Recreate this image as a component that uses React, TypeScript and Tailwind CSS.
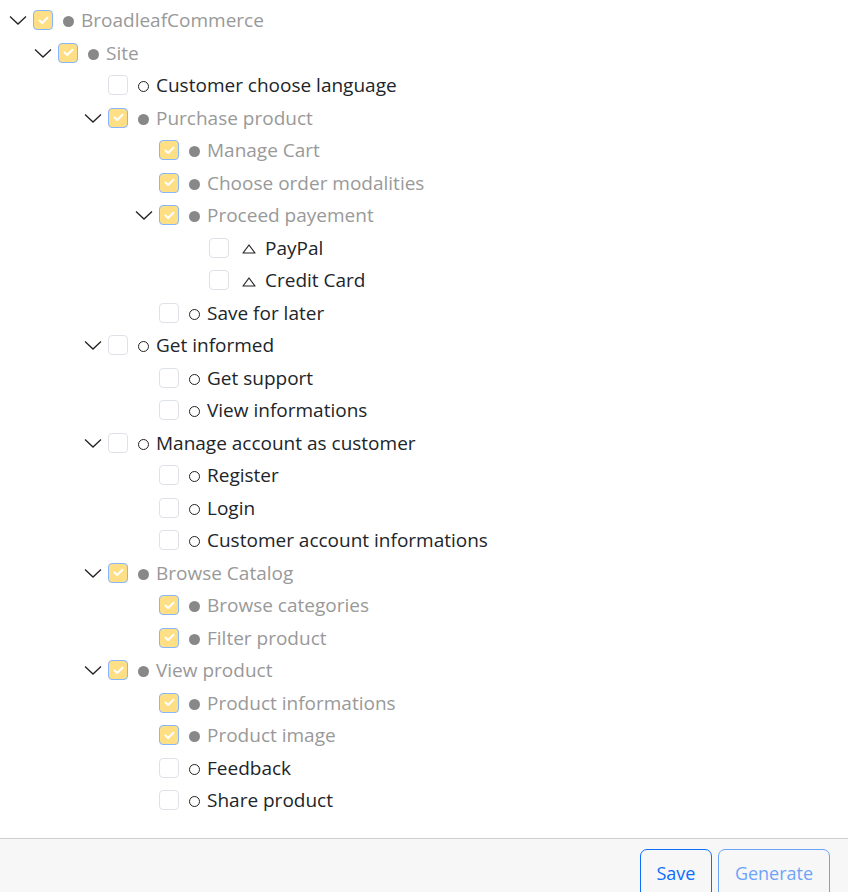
import React from 'react'

type Node = {
  label: string
  depth: number
  checked?: boolean
  open?: boolean
  mark?: 'tri'
}

const rows: Node[] = [
  { label: 'BroadleafCommerce', depth: 0, checked: true, open: true },
  { label: 'Site', depth: 1, checked: true, open: true },
  { label: 'Customer choose language', depth: 2 },
  { label: 'Purchase product', depth: 2, checked: true, open: true },
  { label: 'Manage Cart', depth: 3, checked: true },
  { label: 'Choose order modalities', depth: 3, checked: true },
  { label: 'Proceed payement', depth: 3, checked: true, open: true },
  { label: 'PayPal', depth: 4, mark: 'tri' },
  { label: 'Credit Card', depth: 4, mark: 'tri' },
  { label: 'Save for later', depth: 3 },
  { label: 'Get informed', depth: 2, open: true },
  { label: 'Get support', depth: 3 },
  { label: 'View informations', depth: 3 },
  { label: 'Manage account as customer', depth: 2, open: true },
  { label: 'Register', depth: 3 },
  { label: 'Login', depth: 3 },
  { label: 'Customer account informations', depth: 3 },
  { label: 'Browse Catalog', depth: 2, checked: true, open: true },
  { label: 'Browse categories', depth: 3, checked: true },
  { label: 'Filter product', depth: 3, checked: true },
  { label: 'View product', depth: 2, checked: true, open: true },
  { label: 'Product informations', depth: 3, checked: true },
  { label: 'Product image', depth: 3, checked: true },
  { label: 'Feedback', depth: 3 },
  { label: 'Share product', depth: 3 },
]

const indent = ['pl-[8px]', 'pl-[33px]', 'pl-[83px]', 'pl-[134px]', 'pl-[184px]']

function Chevron() {
  return (
    <svg width="18" height="10" viewBox="0 0 18 10" fill="none">
      <path d="M1 1.5 L9 9 L17 1.5" stroke="#222" strokeWidth="1.3" />
    </svg>
  )
}

function Checkbox({ checked }: { checked?: boolean }) {
  if (checked) {
    return (
      <div className="w-[20px] h-[20px] rounded-[4px] border border-[#86b7fe] bg-[#ffdf85] flex items-center justify-center shrink-0">
        <svg width="11" height="9" viewBox="0 0 11 9" fill="none">
          <path d="M1.5 4.5 L4.2 7 L9.5 1.8" stroke="#fff" strokeWidth="2" strokeLinecap="round" strokeLinejoin="round" />
        </svg>
      </div>
    )
  }
  return <div className="w-[20px] h-[20px] rounded-[4px] border border-[#dee2e6] bg-white shrink-0" />
}

function Row({ node }: { node: Node }) {
  let mark
  if (node.mark === 'tri') {
    mark = (
      <svg width="14" height="10" viewBox="0 0 14 10" className="ml-[13px] mr-[9px] mt-[3px]" fill="none">
        <path d="M7 1 L13 9 L1 9 Z" stroke="#222" strokeWidth="1.2" strokeLinejoin="round" />
      </svg>
    )
  } else if (node.checked) {
    mark = <div className="w-[11px] h-[11px] rounded-full bg-[#888] ml-[10px] mr-[7px] mt-[3px]" />
  } else {
    mark = <div className="w-[11px] h-[11px] rounded-full border border-[#222] ml-[10px] mr-[7px] mt-[3px]" />
  }
  return (
    <div className={`flex items-center h-[32.5px] ${indent[node.depth]}`}>
      <div className="w-[25px] flex items-center pl-[1px]">{node.open ? <Chevron /> : null}</div>
      <Checkbox checked={node.checked} />
      {mark}
      <span className={`text-[19px] leading-none mt-[1px] ${node.checked ? 'text-[#999]' : 'text-[#212529]'}`}>
        {node.label}
      </span>
    </div>
  )
}

export default function App() {
  return (
    <div className="w-[848px] h-[892px] bg-white flex flex-col overflow-hidden" style={{ fontFamily: '"Open Sans", "Noto Sans", sans-serif' }}>
      <div className="pt-[4px] pb-[21px]">
        {rows.map((r) => (
          <Row key={r.label} node={r} />
        ))}
      </div>
      <div className="flex-1 border-t border-[#d0d0d0] bg-[#f7f7f7] flex justify-end items-start gap-[6px] pt-[10px] pr-[18px]">
        <button className="h-[50px] w-[72px] rounded-[7px] border border-[#0d6efd] text-[#0d6efd] text-[18px] bg-transparent">
          Save
        </button>
        <button disabled className="h-[50px] w-[112px] rounded-[7px] border border-[#0d6efd] text-[#0d6efd] text-[18px] bg-transparent opacity-60">
          Generate
        </button>
      </div>
    </div>
  )
}
